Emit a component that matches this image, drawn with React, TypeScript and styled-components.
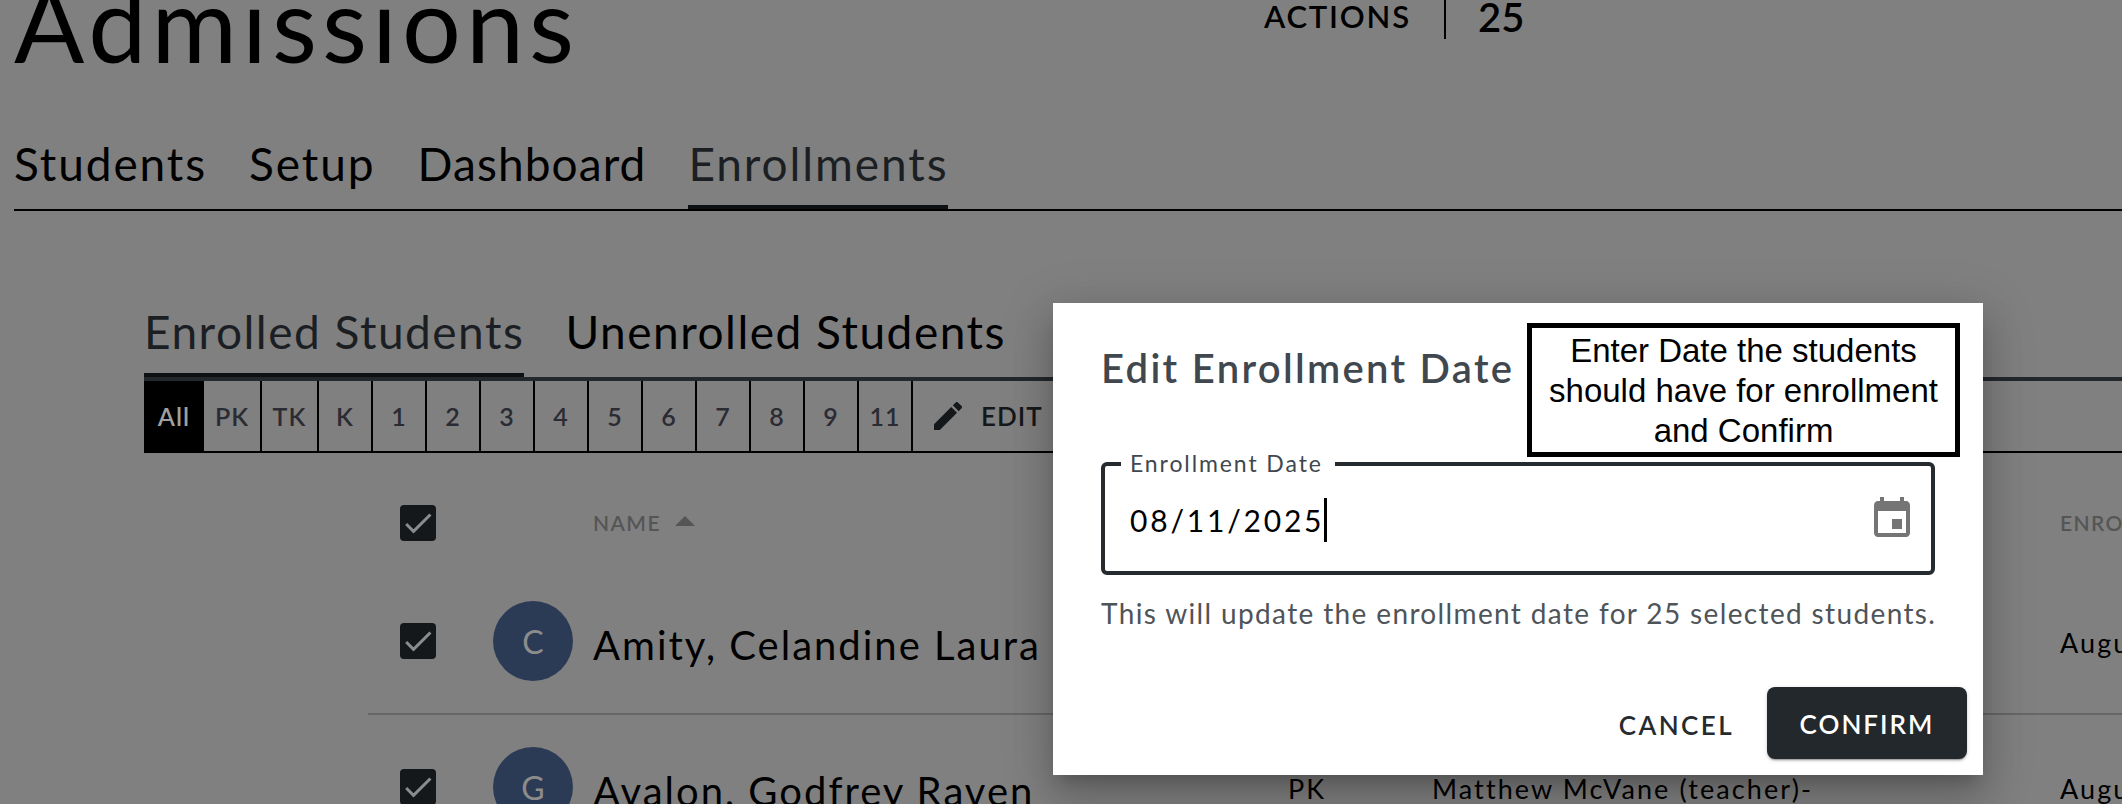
import { createGlobalStyle, styled } from 'styled-components';

const FONT = `Lato, "Open Sans", sans-serif`;

const GlobalStyle = createGlobalStyle`
  html, body {
    margin: 0;
    height: 100%;
    background: #808080;
  }
  * {
    box-sizing: border-box;
  }
`;

const grades = ['PK', 'TK', 'K', '1', '2', '3', '4', '5', '6', '7', '8', '9', '11'];

const students = [
  { initial: 'C', name: 'Amity, Celandine Laura', grade: 'PK', teacher: 'Matthew McVane (teacher)-', date: 'August 11, 2025' },
  { initial: 'G', name: 'Avalon, Godfrey Raven', grade: 'PK', teacher: 'Matthew McVane (teacher)-', date: 'August 11, 2025' },
];

const CheckMark = () => (
  <svg width="36" height="36" viewBox="0 0 24 24" aria-hidden="true">
    <path fill="#8c8c8c" d="M9 16.17L4.83 12l-1.42 1.41L9 19 21 7l-1.41-1.41z" />
  </svg>
);

const App = () => (
  <Page>
    <GlobalStyle />
    <TopRow>
      <Title>Admissions</Title>
      <Actions>
        <ActionsLabel>ACTIONS</ActionsLabel>
        <ActionsCount>25</ActionsCount>
      </Actions>
    </TopRow>
    <MainTabs>
      <MainTab>Students</MainTab>
      <MainTab>Setup</MainTab>
      <MainTab $spacing={1.1}>Dashboard</MainTab>
      <MainTab $active>Enrollments</MainTab>
    </MainTabs>
    <Section>
      <SubTabs>
        <SubTab $active>Enrolled Students</SubTab>
        <SubTab>Unenrolled Students</SubTab>
      </SubTabs>
      <Filters>
        <AllFilter>All</AllFilter>
        {grades.map((grade) => (
          <Filter key={grade}>{grade}</Filter>
        ))}
        <EditFilter>
          <svg width="28" height="28" viewBox="3 3 18 18" aria-hidden="true">
            <path
              fill="#14181b"
              d="M3 17.25V21h3.75L17.81 9.94l-3.75-3.75L3 17.25zM20.71 7.04c.39-.39.39-1.02 0-1.41l-2.34-2.34a.9959.9959 0 0 0-1.41 0l-1.83 1.83 3.75 3.75 1.83-1.83z"
            />
          </svg>
          EDIT
        </EditFilter>
      </Filters>
      <Table>
        <HeaderRow>
          <Checkbox>
            <CheckMark />
          </Checkbox>
          <span />
          <HeaderCell>
            NAME
            <SortArrow />
          </HeaderCell>
          <span />
          <span />
          <HeaderCell>ENROLLMENT DATE</HeaderCell>
        </HeaderRow>
        {students.map((student) => (
          <Row key={student.name}>
            <Checkbox>
              <CheckMark />
            </Checkbox>
            <Avatar>{student.initial}</Avatar>
            <Name>{student.name}</Name>
            <Cell>{student.grade}</Cell>
            <Cell>{student.teacher}</Cell>
            <Cell>{student.date}</Cell>
          </Row>
        ))}
      </Table>
    </Section>

    <Modal>
      <ModalTitle>Edit Enrollment Date</ModalTitle>
      <Callout>Enter Date the students should have for enrollment and Confirm</Callout>
      <Field>
        <FieldLabel>Enrollment Date</FieldLabel>
        <FieldValue>
          08/11/2025
          <Caret />
        </FieldValue>
        <svg width="48" height="48" viewBox="0 0 24 24" aria-hidden="true">
          <path
            fill="#757575"
            d="M17 12h-5v5h5v-5zM16 1v2H8V1H6v2H5c-1.11 0-1.99.9-1.99 2L3 19c0 1.1.89 2 2 2h14c1.1 0 2-.9 2-2V5c0-1.1-.9-2-2-2h-1V1h-2zm3 18H5V8h14v11z"
          />
        </svg>
      </Field>
      <HelperText>This will update the enrollment date for 25 selected students.</HelperText>
      <ModalActions>
        <CancelButton>CANCEL</CancelButton>
        <ConfirmButton>CONFIRM</ConfirmButton>
      </ModalActions>
    </Modal>
  </Page>
);
export default App;

const Page = styled.div`
  position: relative;
  width: 2122px;
  height: 804px;
  overflow: hidden;
  background: #808080;
  color: #000;
  font-family: ${FONT};
`;

const TopRow = styled.div`
  display: grid;
  grid-template-columns: 1264px auto;
  height: 130px;
  padding-left: 14px;
`;

const Title = styled.h1`
  margin: -42px 0 0;
  font-size: 104px;
  line-height: 130px;
  font-weight: 400;
  letter-spacing: 5px;
`;

const Actions = styled.div`
  display: flex;
  align-items: flex-start;
  margin-left: -14px;
  height: 39px;
`;

const ActionsLabel = styled.span`
  width: 182px;
  height: 39px;
  font-size: 31px;
  line-height: 32px;
  font-weight: 600;
  letter-spacing: 1.8px;
  border-right: 2px solid #000;
`;

const ActionsCount = styled.span`
  margin-left: 32px;
  margin-top: -5px;
  font-size: 40px;
  line-height: 44px;
  font-weight: 600;
`;

const MainTabs = styled.div`
  display: flex;
  gap: 42px;
  height: 81px;
  margin-left: 14px;
  border-bottom: 2px solid #000;
`;

const MainTab = styled.div<{ $active?: boolean; $spacing?: number }>`
  height: 79px;
  padding-top: 8px;
  font-size: 46px;
  line-height: 52px;
  letter-spacing: ${(p) => p.$spacing ?? 1.9}px;
  color: ${(p) => (p.$active ? '#1b1f23' : '#000')};
  border-bottom: 4px solid ${(p) => (p.$active ? '#0d1114' : 'transparent')};
`;

const Section = styled.div`
  padding-left: 144px;
`;

const SubTabs = styled.div`
  display: flex;
  gap: 41px;
  height: 170px;
  padding-top: 93px;
  border-bottom: 4px solid #000;
  border-image: linear-gradient(#000 75%, #23282c 75%) 1;
`;

const SubTab = styled.div<{ $active?: boolean }>`
  height: 73px;
  font-size: 46px;
  line-height: 56px;
  letter-spacing: 1.5px;
  color: ${(p) => (p.$active ? '#1b1f23' : '#000')};
  border-bottom: 4px solid ${(p) => (p.$active ? '#0d1114' : 'transparent')};
`;

const Filters = styled.div`
  display: flex;
  height: 72px;
  border-bottom: 2px solid #000;
`;

const Filter = styled.div`
  display: flex;
  align-items: center;
  justify-content: center;
  width: 54px;
  border-right: 2px solid #000;
  font-size: 25px;
  font-weight: 600;
  letter-spacing: 1px;
  color: #2a2b33;

  &:nth-child(2) {
    width: 58px;
  }
  &:nth-child(3) {
    width: 57px;
  }
`;

const AllFilter = styled(Filter)`
  width: 60px;
  border-right: none;
  background: #000;
  color: #a0a0a0;
`;

const EditFilter = styled.div`
  display: flex;
  align-items: center;
  gap: 19px;
  padding-left: 21px;
  font-size: 26px;
  font-weight: 600;
  letter-spacing: 1px;
  color: #14181b;
`;

const Table = styled.div`
  margin-left: 224px;
`;

const columns = `126px 99px 695px 144px 628px 600px`;

const HeaderRow = styled.div`
  display: grid;
  grid-template-columns: ${columns};
  align-items: center;
  height: 116px;
  padding-top: 23px;
`;

const HeaderCell = styled.div`
  display: flex;
  align-items: center;
  gap: 14px;
  font-size: 21px;
  font-weight: 600;
  letter-spacing: 1.4px;
  color: #555;
  white-space: nowrap;
`;

const SortArrow = styled.i`
  width: 0;
  height: 0;
  margin-top: -4px;
  border-left: 10px solid transparent;
  border-right: 10px solid transparent;
  border-bottom: 10px solid #555;
`;

const Row = styled.div`
  display: grid;
  grid-template-columns: ${columns};
  align-items: center;
  height: 146px;
  border-bottom: 2px solid #666;
`;

const Checkbox = styled.div`
  width: 36px;
  height: 36px;
  margin-left: 32px;
  border-radius: 4px;
  background: #14181b;
`;

const Avatar = styled.div`
  display: flex;
  align-items: center;
  justify-content: center;
  width: 80px;
  height: 80px;
  margin-left: -1px;
  border-radius: 50%;
  background: #2c3b55;
  color: #8c8c8c;
  font-size: 32px;
`;

const Name = styled.div`
  padding-top: 7px;
  font-size: 40px;
  letter-spacing: 2px;
  white-space: nowrap;
`;

const Cell = styled.div`
  padding-top: 3px;
  font-size: 27px;
  letter-spacing: 2.1px;
  white-space: nowrap;
`;

const Modal = styled.div`
  position: absolute;
  left: 1053px;
  top: 303px;
  width: 930px;
  height: 472px;
  padding: 41px 48px 16px 48px;
  background: #fff;
  box-shadow:
    0 11px 15px -7px rgba(0, 0, 0, 0.2),
    0 24px 38px 3px rgba(0, 0, 0, 0.14),
    0 9px 46px 8px rgba(0, 0, 0, 0.12);
`;

const ModalTitle = styled.h2`
  margin: 0;
  height: 118px;
  font-size: 40px;
  line-height: 48px;
  font-weight: 600;
  letter-spacing: 2.3px;
  color: #41474e;
`;

const Callout = styled.div`
  position: absolute;
  left: 474px;
  top: 20px;
  width: 433px;
  height: 134px;
  padding-top: 3px;
  border: 5px solid #000;
  background: #fff;
  font-family: 'Liberation Sans', Arial, sans-serif;
  font-size: 33px;
  line-height: 40px;
  text-align: center;
  color: #000;
`;

const Field = styled.div`
  position: relative;
  display: flex;
  align-items: center;
  justify-content: space-between;
  width: 834px;
  height: 113px;
  padding: 0 15px 0 25px;
  border: 4px solid #262b30;
  border-radius: 6px;
`;

const FieldLabel = styled.span`
  position: absolute;
  left: 16px;
  top: -16px;
  padding: 0 12px 0 9px;
  background: #fff;
  font-size: 23px;
  line-height: 26px;
  letter-spacing: 1.9px;
  color: #41474e;
`;

const FieldValue = styled.div`
  display: flex;
  align-items: center;
  padding-top: 2px;
  font-size: 30px;
  letter-spacing: 2.8px;
  color: #000;
`;

const Caret = styled.i`
  width: 3px;
  height: 44px;
  background: #000;
`;

const HelperText = styled.p`
  margin: 21px 0 0;
  font-size: 28px;
  line-height: 34px;
  letter-spacing: 1.36px;
  white-space: nowrap;
  color: #4f5459;
`;

const ModalActions = styled.div`
  position: absolute;
  right: 16px;
  bottom: 16px;
  display: flex;
  align-items: center;
  gap: 33px;
`;

const CancelButton = styled.div`
  padding-top: 3px;
  font-size: 26px;
  font-weight: 600;
  letter-spacing: 2.4px;
  color: #262b30;
`;

const ConfirmButton = styled.div`
  display: flex;
  align-items: center;
  justify-content: center;
  width: 200px;
  height: 72px;
  padding-top: 2px;
  border-radius: 8px;
  background: #23282c;
  color: #fff;
  font-size: 26px;
  font-weight: 600;
  letter-spacing: 2px;
  box-shadow:
    0 3px 1px -2px rgba(0, 0, 0, 0.2),
    0 2px 2px 0 rgba(0, 0, 0, 0.14),
    0 1px 5px 0 rgba(0, 0, 0, 0.12);
`;
